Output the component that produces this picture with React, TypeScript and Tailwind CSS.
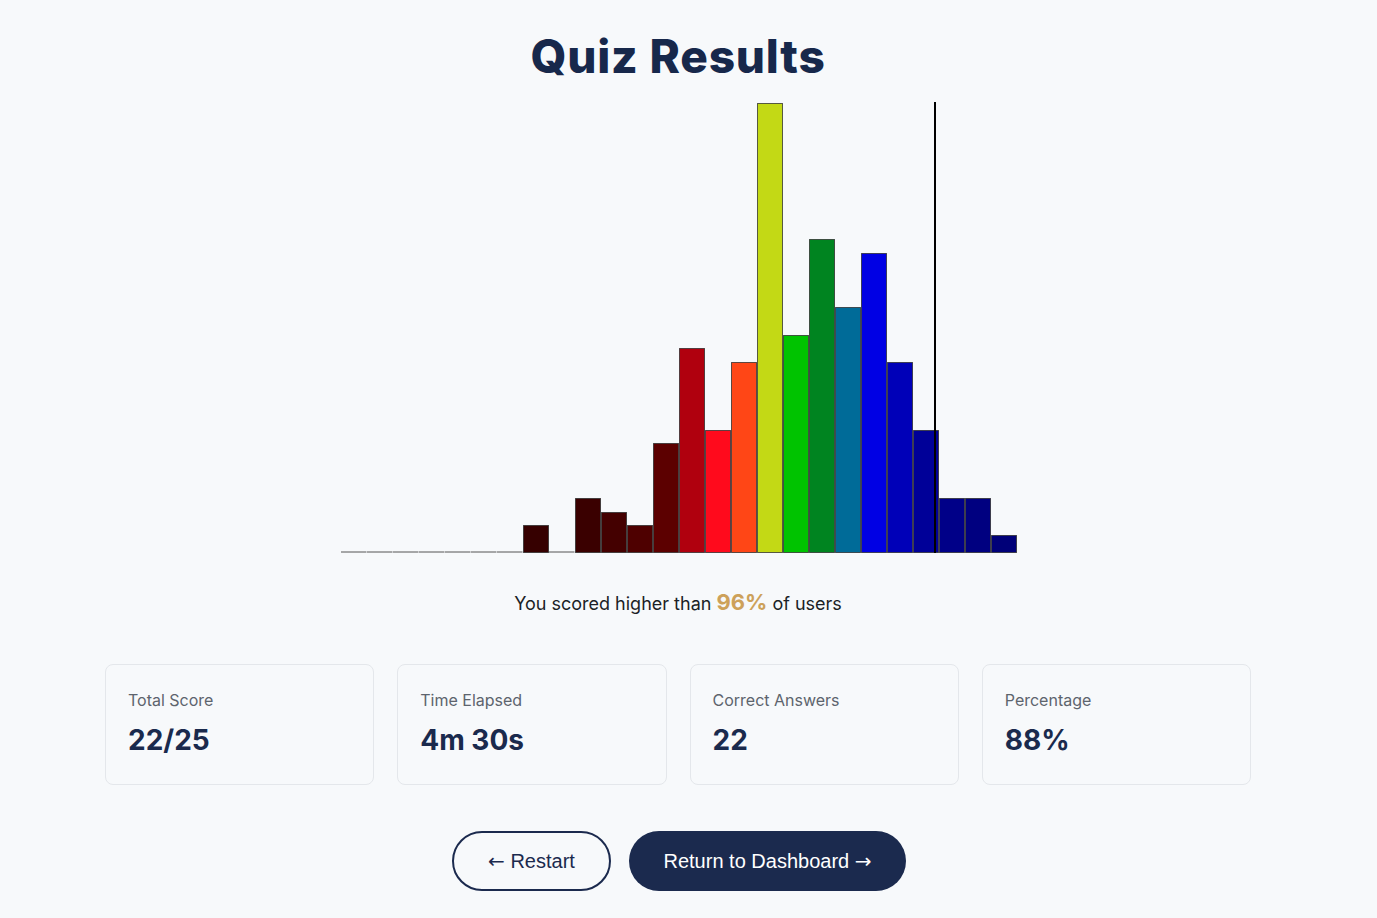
import React from "react";

const bars: { h: number; c: string }[] = [
  { h: 0, c: "" },
  { h: 0, c: "" },
  { h: 0, c: "" },
  { h: 0, c: "" },
  { h: 0, c: "" },
  { h: 0, c: "" },
  { h: 0, c: "" },
  { h: 27, c: "#360000" },
  { h: 0, c: "" },
  { h: 54, c: "#3a0000" },
  { h: 40, c: "#440000" },
  { h: 27, c: "#4e0000" },
  { h: 109, c: "#5c0000" },
  { h: 204, c: "#b0000e" },
  { h: 122, c: "#ff0a1c" },
  { h: 190, c: "#ff4616" },
  { h: 449, c: "#c3d915" },
  { h: 217, c: "#00c300" },
  { h: 313, c: "#008420" },
  { h: 245, c: "#006b98" },
  { h: 299, c: "#0000e4" },
  { h: 190, c: "#0000b8" },
  { h: 122, c: "#000098" },
  { h: 54, c: "#000088" },
  { h: 54, c: "#000080" },
  { h: 17, c: "#000078" },
];

function Chart() {
  const bw = 26;
  const base = 450;
  return (
    <svg width="678" height="453" viewBox="0 0 678 453" className="block">
      {bars.map((b, i) => {
        const x = 1 + i * bw;
        if (b.h === 0) {
          return (
            <line key={i} x1={x} x2={x + bw - 0.5} y1={base} y2={base} stroke="#555" strokeWidth="1" />
          );
        }
        return (
          <rect
            key={i}
            x={x + 0.5}
            y={base - b.h + 0.5}
            width={bw - 1}
            height={b.h}
            fill={b.c}
            stroke="rgba(40,40,40,0.75)"
            strokeWidth="1"
          />
        );
      })}
      <line x1="595" x2="595" y1="0" y2={base + 1} stroke="#000" strokeWidth="2" />
    </svg>
  );
}

function Card({ label, value }: { label: string; value: string }) {
  return (
    <div className="h-[121px] rounded-lg border border-[#e4e7eb] bg-[#f7f9fb] pl-[22px] pt-[23px]">
      <div className="text-[16px] leading-[24px] text-[#5d646d]">{label}</div>
      <div className="mt-[10px] text-[28px] font-bold leading-[36px] text-[#1a2a4d]">{value}</div>
    </div>
  );
}

export default function App() {
  return (
    <div
      className="min-h-[918px] w-full bg-[#f7f9fb]"
      style={{ fontFamily: "Inter, 'Noto Sans', sans-serif" }}
    >
      <div className="flex w-[1356px] flex-col items-center pt-[28px]">
        <h1
          className="text-[46px] font-extrabold leading-[56px] tracking-[0.8px] text-[#17284b]"
          style={{ fontFamily: "Inter, 'Open Sans', sans-serif" }}
        >
          Quiz Results
        </h1>
        <div className="mt-[18px] pl-[2px]">
          <Chart />
        </div>
        <p className="mt-[33px] text-[18px] leading-[28px] text-[#1c1f26]">
          You scored higher than{" "}
          <span className="text-[22px] font-bold text-[#cda15a]">96%</span> of users
        </p>
        <div className="mt-[46px] grid w-[1146px] grid-cols-4 gap-[23px]">
          <Card label="Total Score" value="22/25" />
          <Card label="Time Elapsed" value="4m 30s" />
          <Card label="Correct Answers" value="22" />
          <Card label="Percentage" value="88%" />
        </div>
        <div
          className="mt-[46px] flex gap-[18px] pl-[2px]"
          style={{ fontFamily: "'Liberation Sans', Arial, sans-serif" }}
        >
          <button className="h-[60px] w-[159px] rounded-full border-2 border-[#1b2a4e] bg-transparent text-[20px] text-[#1b2a4e]">
            <span style={{ fontFamily: "'DejaVu Sans', sans-serif" }}>←</span> Restart
          </button>
          <button className="h-[60px] w-[277px] rounded-full bg-[#1b2a4e] text-[20px] text-white">
            Return to Dashboard <span style={{ fontFamily: "'DejaVu Sans', sans-serif" }}>→</span>
          </button>
        </div>
      </div>
    </div>
  );
}
